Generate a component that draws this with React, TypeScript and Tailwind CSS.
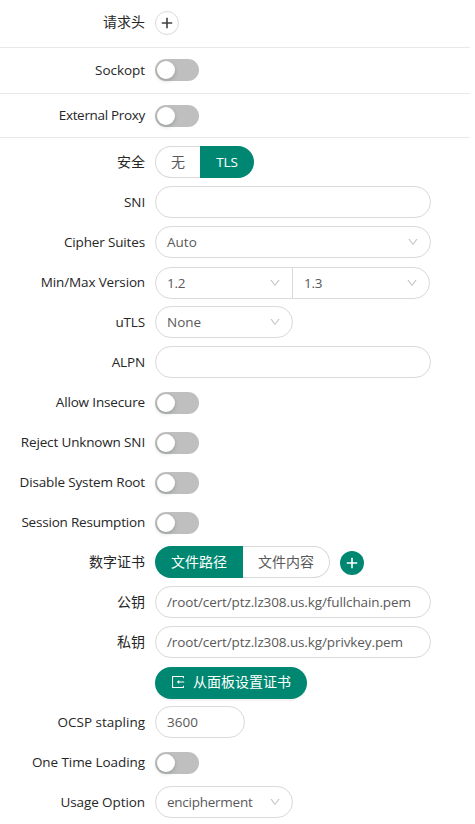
import type { ReactNode } from "react";

const Divider = () => <div className="h-px w-[470px] bg-[#e8e8e8]" />;

function Row({ label, height = "h-10", labelClass = "tracking-[-0.15px]", children }: { label?: string; height?: string; labelClass?: string; children: ReactNode }) {
  return (
    <div className={`flex items-center ${height}`}>
      <div className={`w-[145px] shrink-0 whitespace-nowrap text-right text-[#262626] ${labelClass}`}>{label}</div>
      <div className="ml-2.5 flex items-center">{children}</div>
    </div>
  );
}

const Switch = ({ className = "" }: { className?: string }) => (
  <div className={`h-[22px] w-11 rounded-full bg-[#bfbfbf] p-0.5 ${className}`}>
    <div className="size-[18px] rounded-full bg-white shadow-[0_2px_4px_rgba(0,35,11,0.2)]" />
  </div>
);

const Chevron = () => (
  <svg width="12" height="12" viewBox="0 0 1024 1024" fill="#bfbfbf">
    <path d="M884 256h-75c-5.100 0-9.900 2.500-12.900 6.600L512 654.200 227.900 262.600c-3-4.100-7.800-6.600-12.900-6.600h-75c-6.500 0-10.300 7.400-6.500 12.700l352.600 486.100c12.800 17.600 39 17.600 51.700 0l352.600-486.100c3.900-5.300.1-12.700-6.400-12.700z" />
  </svg>
);

const Plus = () => (
  <svg width="14" height="14" viewBox="0 0 14 14" fill="currentColor">
    <path d="M6.200 1.800h1.600v4.400h4.400v1.600H7.800v4.400H6.200V7.800H1.800V6.200h4.400z" />
  </svg>
);

function Field({ value = "", width = "w-[276px]", select = false, className = "rounded-full", textClass = "" }: { value?: string; width?: string; select?: boolean; className?: string; textClass?: string }) {
  return (
    <div className={`flex h-8 items-center justify-between border border-[#d9d9d9] bg-white px-[11px] text-[#595959] ${width} ${className}`}>
      <span className={`whitespace-nowrap ${textClass}`}>{value}</span>
      {select && <Chevron />}
    </div>
  );
}

export default function App() {
  return (
    <div className="h-[824px] w-[475px] overflow-hidden bg-white font-['Open_Sans','Noto_Sans_CJK_SC',sans-serif] text-[13.5px] leading-[21px]">
      <Row label="请求头" height="h-[47px]" labelClass="text-[14px] pb-1">
        <div className="mb-px flex size-6 items-center justify-center rounded-full border border-[#d9d9d9] text-[#404040]"><Plus /></div>
      </Row>
      <Divider />
      <Row label="Sockopt" height="h-[45px]" labelClass="tracking-[-0.05px]"><Switch className="mb-px" /></Row>
      <Divider />
      <Row label="External Proxy" height="h-[43px]" labelClass="tracking-[-0.32px]"><Switch /></Row>
      <Divider />
      <div className="pt-1">
        <Row label="安全" labelClass="text-[14px] pb-0.5">
          <div className="flex h-8 text-[14px]">
            <div className="flex w-[45px] items-center justify-center rounded-l-full border border-r-0 border-[#d9d9d9] pb-0.5 text-[#595959]">无</div>
            <div className="flex w-[54px] items-center justify-center rounded-r-full bg-[#008771] text-[13.5px] tracking-[-0.1px] text-white">TLS</div>
          </div>
        </Row>
        <Row label="SNI"><Field /></Row>
        <Row label="Cipher Suites"><Field value="Auto" select /></Row>
        <Row label="Min/Max Version">
          <div className="flex pt-0.5">
            <Field value="1.2" width="w-[138px]" select className="rounded-l-full" textClass="tracking-[-0.2px]" />
            <Field value="1.3" width="w-[138px]" select className="-ml-px rounded-r-full" textClass="tracking-[-0.2px]" />
          </div>
        </Row>
        <Row label="uTLS"><Field value="None" width="w-[138px]" select /></Row>
        <Row label="ALPN"><Field /></Row>
        <Row label="Allow Insecure"><Switch className="mt-0.5" /></Row>
        <Row label="Reject Unknown SNI"><Switch className="mt-0.5" /></Row>
        <Row label="Disable System Root"><Switch className="mt-0.5" /></Row>
        <Row label="Session Resumption" labelClass="tracking-[-0.2px]"><Switch className="mt-0.5" /></Row>
        <Row label="数字证书" labelClass="text-[14px] pb-0.5">
          <div className="flex h-8 text-[14px]">
            <div className="flex w-[88px] items-center justify-center rounded-l-full bg-[#008771] pb-0.5 text-white">文件路径</div>
            <div className="flex w-[87px] items-center justify-center rounded-r-full border border-l-0 border-[#d9d9d9] pb-0.5 text-[#595959]">文件内容</div>
          </div>
          <div className="mt-0.5 ml-2.5 flex size-6 items-center justify-center rounded-full bg-[#008771] text-white"><Plus /></div>
        </Row>
        <Row label="公钥" labelClass="text-[14px] pb-0.5"><Field value="/root/cert/ptz.lz308.us.kg/fullchain.pem" textClass="tracking-[-0.11px]" /></Row>
        <Row label="私钥" labelClass="text-[14px] pb-0.5"><Field value="/root/cert/ptz.lz308.us.kg/privkey.pem" textClass="tracking-[-0.11px]" /></Row>
        <Row>
          <div className="mt-0.5 flex h-8 w-[152px] items-center rounded-full bg-[#008771] pl-4 text-[14px] text-white shadow-[0_2px_0_rgba(0,0,0,0.045)]">
            <svg width="14" height="14" viewBox="64 64 896 896" fill="currentColor" className="mb-0.5">
              <path d="M888.3 757.4h-53.8c-4.2 0-7.7 3.5-7.7 7.7v61.800H197.100V197.100h629.800v61.800c0 4.200 3.500 7.700 7.700 7.700h53.800c4.200 0 7.700-3.400 7.700-7.700V158.700c0-17-13.700-30.700-30.700-30.700H158.700c-17 0-30.700 13.700-30.700 30.700v706.600c0 17 13.700 30.700 30.700 30.700h706.600c17 0 30.700-13.700 30.700-30.700V765.100c0-4.300-3.500-7.700-7.700-7.700zM902 476H588v-76c0-6.700-7.800-10.500-13-6.300l-141.900 112a8 8 0 0 0 0 12.600l141.900 112c5.300 4.200 13 .4 13-6.300v-76h314c4.400 0 8-3.600 8-8v-56c0-4.400-3.600-8-8-8z" />
            </svg>
            <span className="ml-2 whitespace-nowrap pb-[3px]">从面板设置证书</span>
          </div>
        </Row>
        <Row label="OCSP stapling" labelClass=""><Field value="3600" width="w-[90px]" /></Row>
        <Row label="One Time Loading" labelClass="tracking-[-0.07px]"><Switch className="mt-0.5" /></Row>
        <Row label="Usage Option" labelClass="tracking-[-0.08px]"><Field value="encipherment" width="w-[138px]" select textClass="tracking-[-0.25px]" /></Row>
      </div>
    </div>
  );
}
